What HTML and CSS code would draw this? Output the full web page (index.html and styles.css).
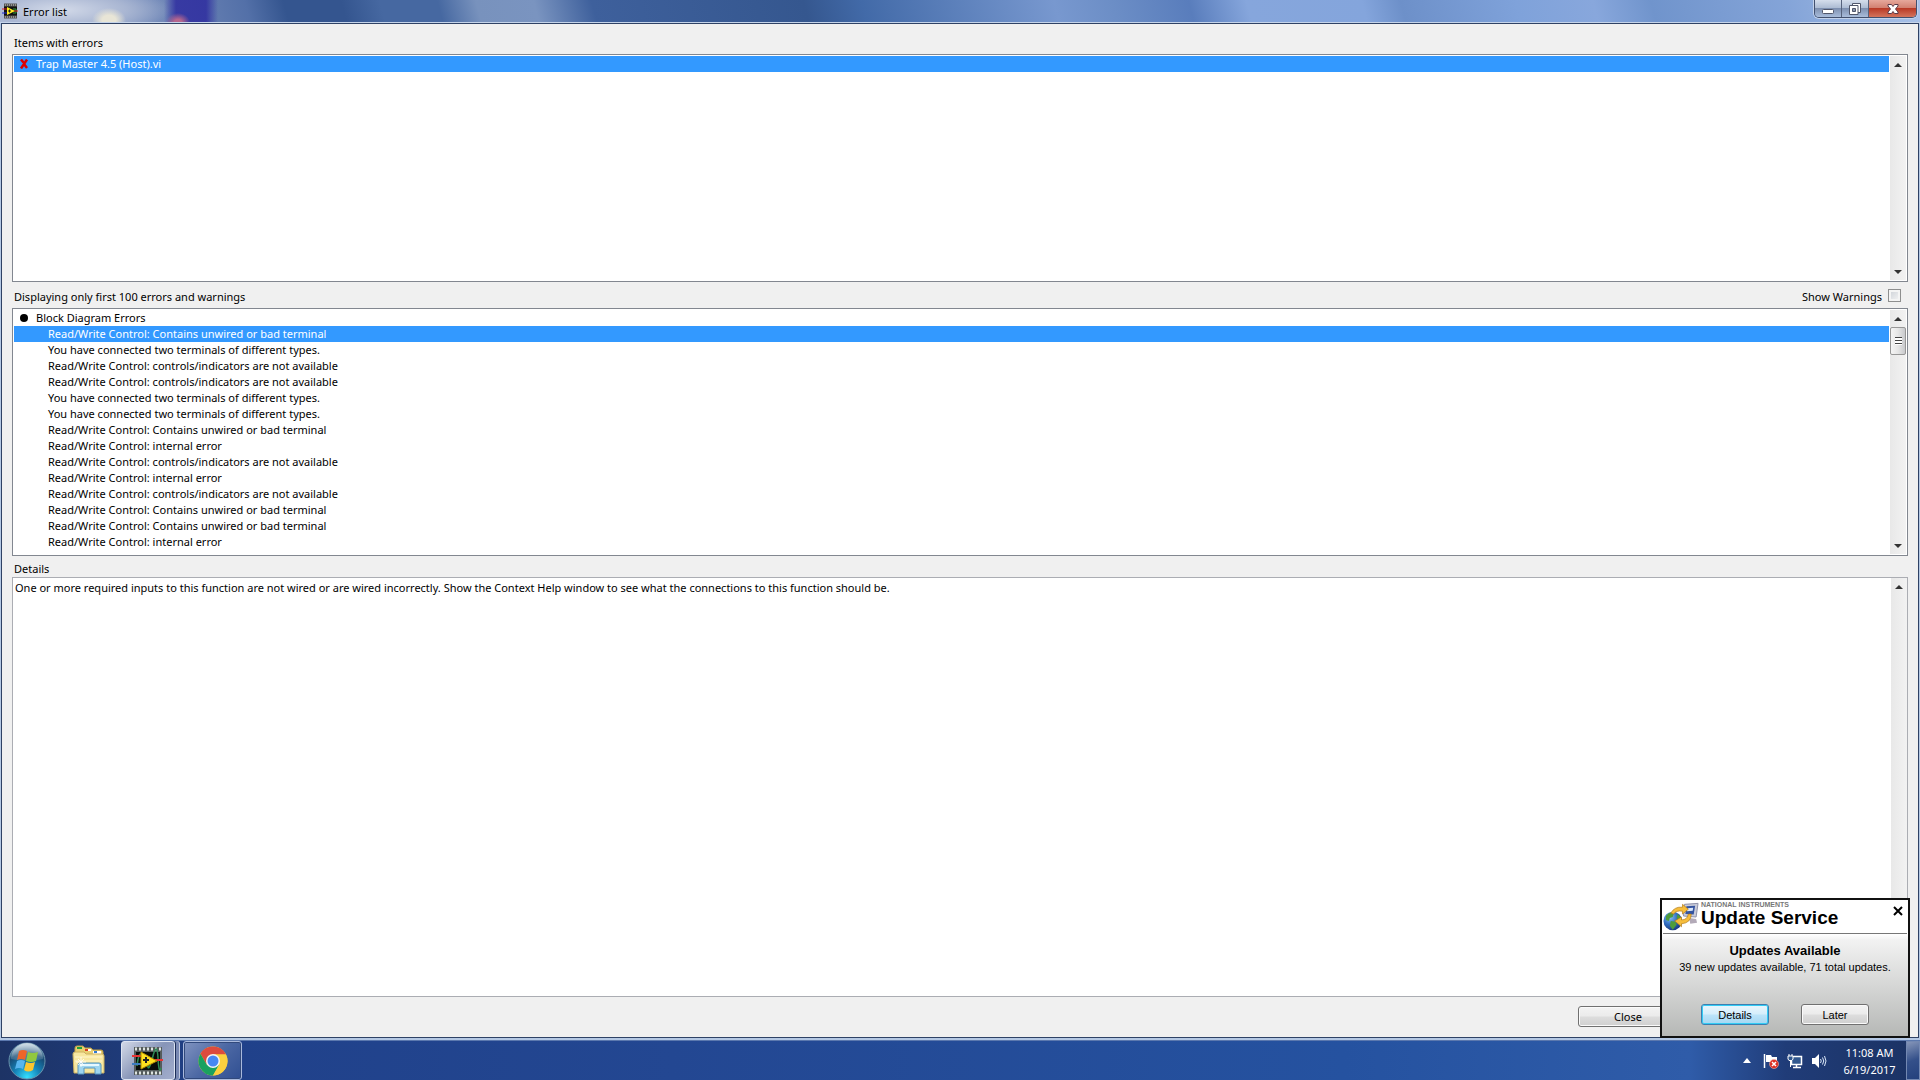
FILE: index.html
```html
<!DOCTYPE html>
<html lang="en">
  <head>
    <meta charset="UTF-8" />
    <meta name="viewport" content="width=device-width, initial-scale=1.0" />
    <title>Error list</title>
    <link rel="stylesheet" href="styles.css">
  </head>
  <body>
    <main class="window">
      <header class="title-bar">
        <svg class="app-icon" width="16" height="16" viewBox="0 0 16 16">
          <rect x="2" y="1" width="13" height="14" fill="#111" />
          <path d="M2 2h13M2 14h13" stroke="#555" stroke-width="3" />
          <path d="M3 2h12M3 14h12" stroke="#d0d0c8" stroke-width="1" stroke-dasharray="1 1" />
          <path d="M11 6h3v4h-3" stroke="#2f9a35" fill="none" />
          <path d="M0 6h5M11 8h5" stroke="#e02020" />
          <path d="M0 10h5" stroke="#2030d0" />
          <path d="M5 4l8 4-8 4z" fill="#ffee20" />
          <path d="M6 8h3M7.500 6.500v3" stroke="#222" />
        </svg>
        <h1 class="title">Error list</h1>
        <div class="window-buttons">
          <button class="win-btn" aria-label="Minimize">
            <svg width="14" height="14" viewBox="0 0 14 14"><rect x="1.500" y="7.500" width="11" height="4" rx="1" fill="#fff" stroke="#50566a" /></svg>
          </button>
          <button class="win-btn" aria-label="Restore">
            <svg width="14" height="14" viewBox="0 0 14 14">
              <path d="M4.500 1.500h8v9h-8z" fill="#fff" stroke="#50566a" />
              <path d="M1.500 3.500h8.500v9h-8.500z" fill="#fff" stroke="#50566a" />
              <path d="M4.500 6.500h3v3h-3z" fill="#8d97ae" stroke="#50566a" />
            </svg>
          </button>
          <button class="win-btn close-win" aria-label="Close window">
            <svg width="14" height="14" viewBox="0 0 14 14"><path d="M2 2.500h3.500l1.500 2 1.500-2H12v1.500L9.500 7 12 10v1.500H8.500l-1.500-2-1.500 2H2V10l2.500-3L2 4z" fill="#fff" stroke="#5a3a48" /></svg>
          </button>
        </div>
      </header>

      <div class="content">
        <h2 class="label">Items with errors</h2>
        <div class="panel items-panel">
          <ul class="list">
            <li class="row item selected">
              <svg class="mark" width="10" height="10" viewBox="0 0 10 10"><path d="M2 .5l2.500 3M8 .5L2 9.500M5 5l3 4" stroke="#e00000" stroke-width="2.500" fill="none" /></svg>
              Trap Master 4.5 (Host).vi
            </li>
          </ul>
          <div class="scrollbar">
            <button class="scroll-btn" aria-label="Scroll items up"><svg width="8" height="4"><path d="M4 0l4 4H0z" fill="#333" /></svg></button>
            <button class="scroll-btn" aria-label="Scroll items down"><svg width="8" height="4"><path d="M0 0h8L4 4z" fill="#333" /></svg></button>
          </div>
        </div>

        <div class="label-row">
          <h2 class="label">Displaying only first 100 errors and warnings</h2>
          <label class="warnings" for="showWarnings">Show Warnings <input type="checkbox" id="showWarnings" /></label>
        </div>
        <div class="panel errors-panel">
          <ul class="list">
            <li class="row item">
              <svg class="mark" width="10" height="10" viewBox="0 0 10 10"><circle cx="5" cy="5" r="4" /></svg>
              Block Diagram Errors
            </li>
            <li class="row error selected">Read/Write Control: Contains unwired or bad terminal</li>
            <li class="row error">You have connected two terminals of different types.</li>
            <li class="row error">Read/Write Control: controls/indicators are not available</li>
            <li class="row error">Read/Write Control: controls/indicators are not available</li>
            <li class="row error">You have connected two terminals of different types.</li>
            <li class="row error">You have connected two terminals of different types.</li>
            <li class="row error">Read/Write Control: Contains unwired or bad terminal</li>
            <li class="row error">Read/Write Control: internal error</li>
            <li class="row error">Read/Write Control: controls/indicators are not available</li>
            <li class="row error">Read/Write Control: internal error</li>
            <li class="row error">Read/Write Control: controls/indicators are not available</li>
            <li class="row error">Read/Write Control: Contains unwired or bad terminal</li>
            <li class="row error">Read/Write Control: Contains unwired or bad terminal</li>
            <li class="row error">Read/Write Control: internal error</li>
            <li class="row error">Read/Write Control: controls/indicators are not available</li>
          </ul>
          <div class="scrollbar">
            <button class="scroll-btn" aria-label="Scroll errors up"><svg width="8" height="4"><path d="M4 0l4 4H0z" fill="#333" /></svg></button>
            <div class="thumb"></div>
            <button class="scroll-btn" aria-label="Scroll errors down"><svg width="8" height="4"><path d="M0 0h8L4 4z" fill="#333" /></svg></button>
          </div>
        </div>

        <label class="label details-label" for="details">Details</label>
        <div class="panel details-panel">
          <textarea class="details" id="details" readonly>One or more required inputs to this function are not wired or are wired incorrectly. Show the Context Help window to see what the connections to this function should be.</textarea>
          <div class="scrollbar">
            <button class="scroll-btn" aria-label="Scroll details up"><svg width="8" height="4"><path d="M4 0l4 4H0z" fill="#333" /></svg></button>
          </div>
        </div>

        <div class="actions">
          <button class="btn close-btn">Close</button>
        </div>
      </div>
    </main>

    <aside class="popup">
      <div class="popup-header">
        <svg width="37" height="30" viewBox="0 0 38 30">
          <defs>
            <radialGradient id="globe" cx=".35" cy=".3" r=".8">
              <stop offset="0" stop-color="#8cc4f4" />
              <stop offset=".5" stop-color="#2f6cc0" />
              <stop offset="1" stop-color="#173072" />
            </radialGradient>
          </defs>
          <path d="M22 2l14-1-2 14-13-1z" fill="#c9cbd9" stroke="#8d90a8" />
          <path d="M24 4l9-.5-1.500 9-8.500-.5z" fill="#3454a0" />
          <path d="M25 6l6-.5-.5 3-6 .5z" fill="#dbe8fa" />
          <path d="M27 16l7 1 1 4-7 1z" fill="#b3aab8" />
          <circle cx="10" cy="19" r="9.500" fill="url(#globe)" />
          <path d="M3 14q4-5 8-3l-1 4-3 1-1 3-3-1zM8 19l5 1 1 3-4 5-3-4zM15 12l3 3v4l-4-3z" fill="#4d9b3c" />
          <path d="M8 11Q12 4 20 5V2l6 5-6 5V9q-7-1-9 3z" fill="#f6bd3b" stroke="#b37a15" stroke-width=".7" />
          <path d="M29 12q0 9-10 10v3l-7-6 7-4v3q6 0 7-6z" fill="#f6bd3b" stroke="#b37a15" stroke-width=".7" />
        </svg>
        <div class="brand">
          <span class="brand-small">NATIONAL INSTRUMENTS</span>
          <span class="brand-big">Update Service</span>
        </div>
        <button class="popup-close" aria-label="Close notification">
          <svg width="10" height="10" viewBox="0 0 10 10"><path d="M1 1l8 8M9 1L1 9" stroke="#000" stroke-width="2" /></svg>
        </button>
      </div>
      <h2 class="popup-title">Updates Available</h2>
      <p class="popup-text">39 new updates available, 71 total updates.</p>
      <div class="popup-actions">
        <button class="btn popup-btn default">Details</button>
        <button class="btn popup-btn">Later</button>
      </div>
    </aside>

    <footer class="taskbar">
      <button class="start" aria-label="Start">
        <svg width="38" height="38" viewBox="0 0 38 38">
          <defs>
            <radialGradient id="orb" cx=".5" cy=".95" r=".9">
              <stop offset="0" stop-color="#35e0ff" />
              <stop offset=".4" stop-color="#1583b8" />
              <stop offset=".75" stop-color="#174a74" />
              <stop offset="1" stop-color="#82a7bd" />
            </radialGradient>
            <linearGradient id="gloss" x2="0" y2="1">
              <stop offset="0" stop-color="#fff" stop-opacity=".6" />
              <stop offset="1" stop-color="#fff" stop-opacity=".1" />
            </linearGradient>
          </defs>
          <circle cx="19" cy="19" r="18" fill="url(#orb)" stroke="#6993ac" />
          <path d="M3 17A16 16 0 0 1 35 17Q19 21 3 17z" fill="url(#gloss)" />
          <path d="M11 9q4-2 8 0l-2 9q-4-2-8 0z" fill="#ee6529" />
          <path d="M20 10q5 2 10 0l-2 9q-5 2-10 0z" fill="#91c83e" />
          <path d="M9 19q4-2 8 0l-2 8q-4-2-8 0z" fill="#57b5ef" />
          <path d="M18 20q5 2 9 0l-2 8q-5 3-9 0z" fill="#fdc52e" />
        </svg>
      </button>
      <button class="task" aria-label="Windows Explorer">
        <svg width="34" height="32" viewBox="0 0 34 32">
          <path d="M3 3q0-2 2-2h6l2 2h6l2 2h8q2 0 2 2v6H3z" fill="#e9cf72" stroke="#b99c45" />
          <path d="M5 2h5v2H5z" fill="#22a03a" />
          <path d="M13 4h6v2h-6z" fill="#fff" /><path d="M13 4h3v2h-3z" fill="#d83a20" />
          <path d="M21 6h8v3h-8z" fill="#fff" /><path d="M22 6h3v2h-3z" fill="#2f7ad0" />
          <path d="M1 9q0-2 2-2h9l2 2h16q2 0 2 2v17H2z" fill="#f7e7a0" stroke="#cdb260" />
          <path d="M3 12h27M3 16h27" stroke="#fff6cc" />
          <path d="M6 29V20q0-2 2-2h19q2 0 2 2v9h-6v-6H12v6z" fill="#9ed5ef" stroke="#5796c0" />
          <path d="M8 20h19" stroke="#e6f8ff" stroke-width="2" />
          <path d="M9 12v10M4 17h10M6 14l6 6M12 14l-6 6" stroke="#fff" stroke-width=".8" />
        </svg>
      </button>
      <button class="task active stacked" aria-label="LabVIEW">
        <svg width="32" height="30" viewBox="0 0 32 30">
          <path d="M2 1h28v28H2z" fill="#555c5c" />
          <path d="M3 3h26M3 27h26" stroke="#dde3df" stroke-width="3" stroke-dasharray="2 2" />
          <path d="M4 6h24v18H4z" fill="#080c0a" />
          <path d="M5 20Q7 3 11 10t5 11 5-11 5 2 3 10" fill="none" stroke="#2e8a55" stroke-width="1.500" />
          <path d="M0 10h10M22 14h9" stroke="#e83535" stroke-width="2" />
          <path d="M0 18h10" stroke="#3b7cc0" stroke-width="2" />
          <path d="M9 6l16 9-16 8z" fill="#ffe11f" stroke="#b48d00" />
          <path d="M11 14h6M14 11v6" stroke="#222" stroke-width="2" />
        </svg>
      </button>
      <button class="task running" aria-label="Google Chrome">
        <svg width="30" height="30" viewBox="0 0 30 30">
          <circle cx="15" cy="15" r="14.500" fill="#fbd03f" />
          <path d="M2.440 7.750A14.500 14.500 0 0 1 27.560 7.750L28 8.500H15L8.700 18.600z" fill="#dc4b3e" />
          <path d="M2.440 7.750A14.500 14.500 0 0 0 15 29.500L21.300 18.400 8.700 18.600z" fill="#1aa15f" />
          <path d="M15 8.500h13A14.500 14.500 0 0 1 15 29.500l6.300-11z" fill="#fbd03f" />
          <circle cx="15" cy="15" r="7" fill="#f3f4f4" />
          <circle cx="15" cy="15" r="5.500" fill="#4687f4" />
        </svg>
      </button>
      <div class="tray">
        <button class="tray-btn tray-more" aria-label="Show hidden icons"><svg width="8" height="5"><path d="M4 0l4 5H0z" fill="#fff" /></svg></button>
        <button class="tray-btn" aria-label="Action Center">
          <svg width="16" height="16" viewBox="0 0 16 16">
            <path d="M1.500 1v14" stroke="#fff" stroke-width="1.500" />
            <path d="M3 2h5l1 2h5v7H9L8 9H3z" fill="#fff" />
            <circle cx="11" cy="11" r="4.500" fill="#db2e22" stroke="#f4b2a8" stroke-width=".6" />
            <path d="M9 9l4 4M13 9l-4 4" stroke="#fff" stroke-width="1.500" />
          </svg>
        </button>
        <button class="tray-btn" aria-label="Network">
          <svg width="16" height="16" viewBox="0 0 16 16">
            <path d="M6 3.500h8.500v8H4.500V8" fill="#31578e" stroke="#fff" stroke-width="1.500" />
            <path d="M9.500 12v2M6 14.500h8" stroke="#fff" stroke-width="1.500" />
            <path d="M1 3h5v3L5 7.500H2L1 6zM2 1v2M5 1v2M3.500 7v7" fill="#31578e" stroke="#fff" />
          </svg>
        </button>
        <button class="tray-btn" aria-label="Volume">
          <svg width="16" height="16" viewBox="0 0 16 16">
            <path d="M1 5h3l4-4v14l-4-4H1z" fill="#fff" />
            <path d="M9.500 6q1.500 2 0 4M11.500 4.500q2.500 3.500 0 7M13.500 3q3 5 0 10" fill="none" stroke="#dce8f8" />
          </svg>
        </button>
      </div>
      <div class="clock">
        <span>11:08 AM</span>
        <span>6/19/2017</span>
      </div>
      <button class="show-desktop" aria-label="Show desktop"></button>
    </footer>
  </body>
</html>
```
FILE: styles.css
```css
* {
  box-sizing: border-box;
}

body {
  margin: 0;
  height: 100vh;
  display: flex;
  flex-direction: column;
  position: relative;
  overflow: hidden;
  background-color: #21448c;
  font-family: "Noto Sans", sans-serif;
  font-size: 11px;
  line-height: 16px;
  color: #000;
}

h1,
h2,
p,
ul {
  margin: 0;
  padding: 0;
  font-size: inherit;
  font-weight: normal;
}

button {
  font: inherit;
  padding: 0;
  border: none;
  background: none;
}

svg {
  display: block;
  flex: none;
}

.window {
  flex: 1;
  min-height: 0;
  display: flex;
  flex-direction: column;
  padding: 0 1px 2px;
  background-color: #b4c8e4;
}

.title-bar {
  height: 23px;
  display: flex;
  align-items: flex-start;
  margin: 0 -1px;
  padding: 0 3px 0 2px;
  border-bottom: 1px solid #c5d4ea;
  background:
    radial-gradient(ellipse 17px 12px at 109px 20px, #e8e5d6 40%, transparent),
    radial-gradient(ellipse 12px 9px at 178px 22px, #b5668e 30%, transparent),
    linear-gradient(90deg, transparent 164px, #2a279ecc 176px, #2a279ecc 206px, transparent 218px),
    radial-gradient(ellipse 110px 26px at 60px 10px, #d3dae9, #a9b6d2 60%, transparent),
    linear-gradient(75deg, #b5c4df 0, #7087b7 9%, #5370a8 13%, #34558f 15%, #34558f 18%, #4668a1 20%, #4668a1 23%, #7892bd 25%, #7a94c0 28%, #3e609c 31%, #35578f 42%, #426aa8 45%, #7898cf 55%, #6c8ec6 58%, #597dbc 62%, #86a6dc 65%, #84a5dc 71%, #6d90c9 73%, #7fa2da 79%, #88a7dc 83%, #7094cc 86%, #84a4d8 93%, #a9c2e8);
}

.app-icon {
  margin-top: 3px;
}

.title {
  flex: 1;
  padding: 4px 5px;
}

.window-buttons {
  display: flex;
  height: 18px;
  border: 1px solid #42506e;
  border-top: none;
  border-radius: 0 0 5px 5px;
  overflow: hidden;
  box-shadow: 0 0 0 1px #c3d2ea;
}

.win-btn {
  width: 27px;
  display: flex;
  align-items: center;
  justify-content: center;
  border-right: 1px solid #56627c;
  background: linear-gradient(#d5deec, #aebdd4 45%, #7e90b0 50%, #a9bddb);
}

.close-win {
  width: 47px;
  border-right: none;
  background: linear-gradient(#e6a89b, #d28171 45%, #b93a26 50%, #d4745c);
}

.content {
  flex: 1;
  min-height: 0;
  display: flex;
  flex-direction: column;
  padding: 11px 10px 10px;
  border: 1px solid #2f4265;
  background-color: #f0f0f0;
}

.label {
  height: 19px;
  padding-left: 2px;
}

.label-row {
  display: flex;
  justify-content: space-between;
  height: 26px;
  padding: 7px 7px 0 0;
}

.warnings {
  display: flex;
  align-items: flex-start;
  gap: 6px;
}

.warnings input {
  appearance: none;
  width: 13px;
  height: 13px;
  margin: 0;
  border: 1px solid #8e8f8f;
  background: linear-gradient(135deg, #cbcfd5, #f6f6f6);
  box-shadow: inset 0 0 0 2px #f4f4f4;
}

.panel {
  display: flex;
  border: 1px solid #828790;
  background-color: #fff;
}

.items-panel {
  height: 228px;
  padding: 1px;
}

.errors-panel {
  height: 248px;
  padding: 1px;
}

.list {
  flex: 1;
  overflow: hidden;
  list-style: none;
}

.row {
  height: 16px;
  white-space: nowrap;
}

.item {
  display: flex;
  align-items: center;
  gap: 7px;
  padding-left: 5px;
}

.error {
  padding-left: 34px;
}

.selected {
  background-color: #3399ff;
  color: #fff;
}

.scrollbar {
  width: 17px;
  display: flex;
  flex-direction: column;
  border-left: 1px solid #fff;
  background: linear-gradient(90deg, #e8e8e8, #f2f2f2);
}

.scroll-btn {
  height: 17px;
  display: flex;
  align-items: center;
  justify-content: center;
}

.scroll-btn:nth-child(n + 2) {
  margin-top: auto;
}

.thumb {
  height: 28px;
  display: flex;
  align-items: center;
  justify-content: center;
  border: 1px solid #979797;
  border-radius: 2px;
  background: linear-gradient(90deg, #f5f5f5, #e6e6e6 50%, #c8c9cc);
}

.thumb::before {
  content: "";
  width: 7px;
  height: 8px;
  background: repeating-linear-gradient(#444 0 1px, #fff 1px 3px);
}

.details-label {
  height: 21px;
  padding-top: 5px;
}

.details-panel {
  flex: 1;
  min-height: 0;
  border-color: #abadb3;
}

.details {
  flex: 1;
  min-width: 0;
  margin: 0;
  padding: 2px;
  border: none;
  outline: none;
  resize: none;
  overflow: hidden;
  font: inherit;
  color: inherit;
}

.actions {
  display: flex;
  justify-content: flex-end;
  padding: 9px 230px 0 0;
}

.btn {
  border: 1px solid #707070;
  border-radius: 3px;
  background: linear-gradient(#f3f3f3, #ebebeb 48%, #dddddd 52%, #cfcfcf);
  box-shadow: inset 0 0 0 1px #fafafa;
}

.close-btn {
  width: 100px;
  height: 21px;
}

.popup {
  position: absolute;
  right: 10px;
  bottom: 42px;
  width: 250px;
  height: 140px;
  display: flex;
  flex-direction: column;
  align-items: center;
  padding: 0 1px;
  border: 2px solid #111;
  background: linear-gradient(#fff 34px, #f2f2f2 40px, #b6b8b6);
  font-family: "Liberation Sans", Arial, sans-serif;
}

.popup-header {
  align-self: stretch;
  display: flex;
  height: 34px;
  padding-top: 2px;
  border-bottom: 1px solid #777;
}

.brand {
  flex: 1;
  display: flex;
  flex-direction: column;
  padding-left: 1px;
  white-space: nowrap;
}

.brand-small {
  font-size: 7px;
  font-weight: bold;
  line-height: 6px;
  color: #777;
}

.brand-big {
  font-size: 19px;
  font-weight: bold;
  line-height: 20px;
}

.popup-close {
  align-self: flex-start;
  padding: 4px;
}

.popup-title {
  margin-top: 9px;
  font-size: 13px;
  font-weight: bold;
}

.popup-text {
  font-size: 11px;
}

.popup-actions {
  display: flex;
  gap: 32px;
  margin-top: 29px;
}

.popup-btn {
  width: 68px;
  height: 21px;
}

.default {
  border-color: #3c7fb1;
  background: linear-gradient(#eaf6fd, #d5eefb 48%, #bce4f9 52%, #a5d7f3);
  box-shadow: inset 0 0 0 1px #33ccf5;
}

.taskbar {
  height: 40px;
  display: flex;
  align-items: stretch;
  border-top: 1px solid #5b78ae;
  background: linear-gradient(90deg, #1d3365, #20418a 12%, #234792 35%, #2552a0 70%, #2f5ca9 88%, #203c78 93%, #1b3263);
}

.start {
  padding: 0 8px;
}

.task {
  width: 59px;
  display: flex;
  align-items: center;
  justify-content: center;
  margin-right: 3px;
  border: 1px solid transparent;
  border-radius: 3px;
}

.start + .task {
  margin-left: 5px;
}

.running {
  border-color: #a9b9dc;
  box-shadow: inset 0 0 0 1px #31497c;
  background: linear-gradient(135deg, #8093c0, #4c68a4 50%, #304f92);
}

.active {
  border-color: #dde4f2;
  background: linear-gradient(135deg, #d3d9e7, #8795b8 50%, #a3aecd);
}

.stacked {
  width: 54px;
  margin: 0 8px 0 0;
  box-shadow: 1px 0 #1b2d57, 4px 0 #7888b2, 5px 0 #c2cbe0;
}

.tray {
  display: flex;
  align-items: center;
  gap: 8px;
  margin-left: auto;
}

.tray-more {
  padding-right: 4px;
}

.clock {
  width: 73px;
  display: flex;
  flex-direction: column;
  justify-content: center;
  margin-left: 6px;
  line-height: 17px;
  text-align: center;
  color: #fff;
}

.show-desktop {
  width: 14px;
  border: 1px solid #7388b2;
  background: linear-gradient(160deg, #8595b8, #34508a 50%, #24417d);
}
```
